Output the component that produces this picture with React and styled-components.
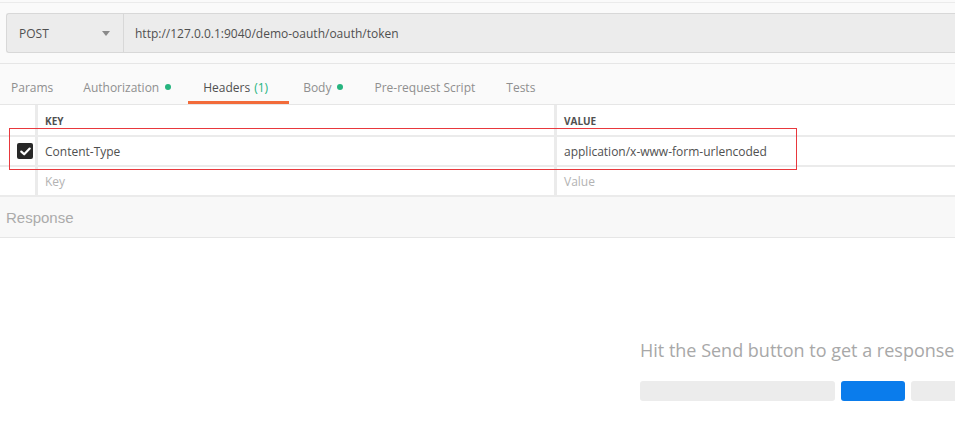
import React from "react";
import styled, { createGlobalStyle } from "styled-components";

const GlobalStyle = createGlobalStyle`
  html, body {
    margin: 0;
    padding: 0;
    background: #ffffff;
    font-family: "Open Sans", "Liberation Sans", sans-serif;
    overflow: hidden;
  }
`;

const Page = styled.div`
  width: 955px;
  height: 426px;
  overflow: hidden;
  position: relative;
  background: #ffffff;
`;

const TopStrip = styled.div`
  height: 2px;
  background: #fafafa;
  border-bottom: 1px solid #ebebeb;
`;

const RequestBar = styled.div`
  display: flex;
  padding: 10px 0 10px 6px;
  background: #fafafa;
  border-bottom: 1px solid #e6e6e6;
`;

const MethodSelect = styled.div`
  width: 116px;
  height: 38px;
  box-sizing: content-box;
  display: flex;
  align-items: center;
  justify-content: space-between;
  background: #ececec;
  border: 1px solid #d8d8d8;
  border-right: none;
  border-radius: 3px 0 0 3px;
  font-size: 12px;
  color: #505050;

  span {
    padding-left: 12px;
  }
`;

const Caret = styled.div`
  width: 0;
  height: 0;
  margin-right: 13px;
  border-left: 4px solid transparent;
  border-right: 4px solid transparent;
  border-top: 5px solid #8a8a8a;
`;

const UrlInput = styled.div`
  flex: 1;
  height: 38px;
  display: flex;
  align-items: center;
  padding-left: 11px;
  background: #ececec;
  border: 1px solid #d8d8d8;
  border-right: none;
  font-size: 12px;
  color: #505050;
`;

const TabsRow = styled.div`
  display: flex;
  height: 40px;
  background: #fafafa;
  border-bottom: 1px solid #e6e6e6;
`;

const Tab = styled.div`
  display: flex;
  align-items: center;
  padding: 9px ${(p) => (p.$active ? 21 : 17)}px 0 ${(p) => (p.$active ? 15 : 14)}px;
  font-size: 12px;
  color: ${(p) => (p.$active ? "#505050" : "#8f8f8f")};
  border-bottom: 3px solid ${(p) => (p.$active ? "#f26b3a" : "transparent")};

  &:first-child {
    padding-left: 11px;
    padding-right: 16px;
  }
`;

const Count = styled.span`
  margin-left: 4px;
  color: #26b47f;
`;

const Dot = styled.span`
  width: 6px;
  height: 6px;
  margin-left: 6px;
  border-radius: 50%;
  background: #26b47f;
`;

const Table = styled.div`
  position: relative;
  background: #ffffff;
`;

const Row = styled.div`
  display: grid;
  grid-template-columns: 35px 519px 1fr;
  height: ${(p) => p.$height}px;
  border-bottom: 2px solid #ebebeb;
`;

const Cell = styled.div`
  display: flex;
  align-items: center;
  padding-left: ${(p) => (p.$first ? 0 : 7)}px;
  justify-content: ${(p) => (p.$first ? "center" : "flex-start")};
  border-left: ${(p) => (p.$first ? "none" : "3px solid #ebebeb")};
  font-size: ${(p) => (p.$head ? "10px" : "12px")};
  font-weight: ${(p) => (p.$head ? 700 : 400)};
  color: ${(p) => (p.$muted ? "#b3b3b3" : "#505050")};
  padding-top: ${(p) => (p.$head ? "2px" : 0)};
`;

const Checkbox = styled.div`
  width: 16px;
  height: 16px;
  margin-left: 15px;
  border-radius: 2px;
  background: #282828;
  display: flex;
  align-items: center;
  justify-content: center;
`;

const Highlight = styled.div`
  position: absolute;
  left: 9px;
  top: 23px;
  width: 786px;
  height: 40px;
  border: 1px solid #e8383d;
  pointer-events: none;
`;

const ResponseBar = styled.div`
  height: 40px;
  display: flex;
  align-items: center;
  padding-left: 6px;
  background: #f8f8f8;
  border-bottom: 1px solid #e6e6e6;
  font-family: "Liberation Sans", Arial, sans-serif;
  font-size: 15px;
  color: #ababab;
`;

const EmptyState = styled.div`
  display: flex;
  flex-direction: column;
  padding: 100px 0 0 640px;
  white-space: nowrap;
`;

const EmptyText = styled.div`
  font-size: 18px;
  line-height: 24px;
  color: #a8a8a8;
`;

const Skeleton = styled.div`
  display: flex;
  gap: 6px;
  margin-top: 19px;
`;

const Bar = styled.div`
  flex: none;
  width: ${(p) => p.$w}px;
  height: 20px;
  border-radius: 3px;
  background: ${(p) => (p.$blue ? "#0a7cec" : "#ececec")};
`;

export default function App() {
  return (
    <Page>
      <GlobalStyle />
      <TopStrip />
      <RequestBar>
        <MethodSelect>
          <span>POST</span>
          <Caret />
        </MethodSelect>
        <UrlInput>http://127.0.0.1:9040/demo-oauth/oauth/token</UrlInput>
      </RequestBar>
      <TabsRow>
        <Tab>Params</Tab>
        <Tab>
          Authorization
          <Dot />
        </Tab>
        <Tab $active>
          Headers<Count>(1)</Count>
        </Tab>
        <Tab>
          Body
          <Dot />
        </Tab>
        <Tab>Pre-request Script</Tab>
        <Tab>Tests</Tab>
      </TabsRow>
      <Table>
        <Row $height={30}>
          <Cell $first />
          <Cell $head>KEY</Cell>
          <Cell $head>VALUE</Cell>
        </Row>
        <Row $height={28}>
          <Cell $first>
            <Checkbox>
              <svg width="11" height="9" viewBox="0 0 11 9">
                <path d="M1.3 4.6 L4.2 7.3 L9.7 1.6" fill="none" stroke="#ffffff" strokeWidth="2.2" strokeLinecap="round" strokeLinejoin="round" />
              </svg>
            </Checkbox>
          </Cell>
          <Cell>Content-Type</Cell>
          <Cell>application/x-www-form-urlencoded</Cell>
        </Row>
        <Row $height={28}>
          <Cell $first />
          <Cell $muted>Key</Cell>
          <Cell $muted>Value</Cell>
        </Row>
        <Highlight />
      </Table>
      <ResponseBar>Response</ResponseBar>
      <EmptyState>
        <EmptyText>Hit the Send button to get a response</EmptyText>
        <Skeleton>
          <Bar $w={195} />
          <Bar $w={64} $blue />
          <Bar $w={120} />
        </Skeleton>
      </EmptyState>
    </Page>
  );
}
